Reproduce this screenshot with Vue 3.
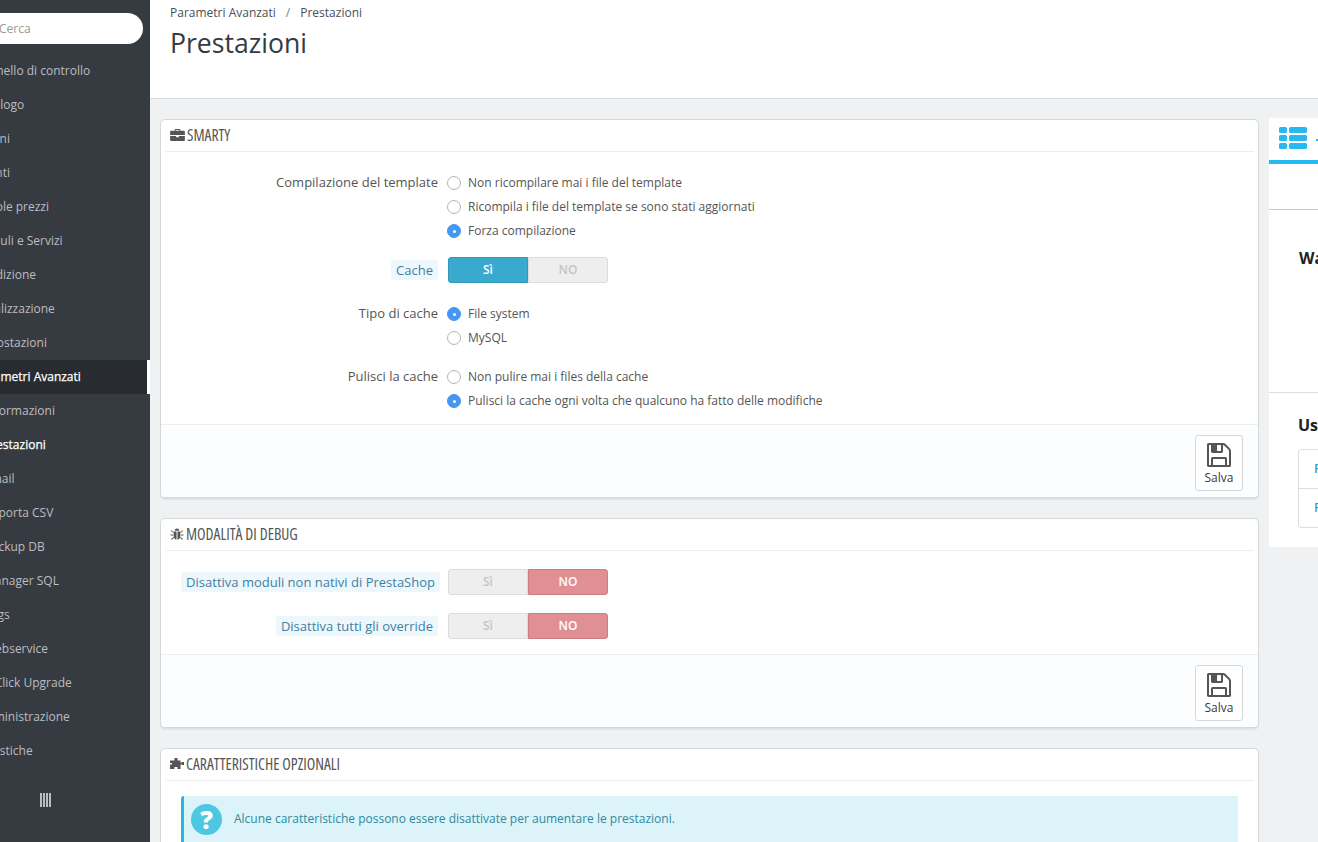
<script setup>
const menu = [
  'Pannello di controllo','Catalogo','Ordini','Clienti','Regole prezzi','Moduli e Servizi','Spedizione',
  'Localizzazione','Impostazioni','Parametri Avanzati','Informazioni','Prestazioni','Email','Importa CSV',
  'Backup DB','Manager SQL','Logs','Webservice','1-Click Upgrade','Amministrazione','Statistiche'
]
const savePath = 'M512 1536h768v-384h-768v384zm896 0h128v-896q0-14-10-38.5t-20-34.5l-281-281q-10-10-34-20t-39-10v416q0 40-28 68t-68 28h-576q-40 0-68-28t-28-68v-416h-128v1280h128v-416q0-40 28-68t68-28h832q40 0 68 28t28 68v416zm-384-928v-320q0-13-9.5-22.5t-22.5-9.5h-192q-13 0-22.5 9.5t-9.5 22.5v320q0 13 9.5 22.5t22.5 9.5h192q13 0 22.5-9.5t9.5-22.5zm640 32v928q0 40-28 68t-68 28h-1344q-40 0-68-28t-28-68v-1344q0-40 28-68t68-28h928q40 0 88 20t76 48l280 280q28 28 48 76t20 88z'
</script>

<template>
  <div class="page">
    <aside class="sidebar">
      <div class="search"><span>Cerca</span></div>
      <ul class="menu">
        <li v-for="(m, i) in menu" :key="m" :class="{ active: i === 9, current: i === 11, sub: i >= 10 && i <= 18 }">
          <span>{{ m }}</span>
        </li>
      </ul>
      <div class="collapse"><i></i><i></i><i></i><i></i></div>
    </aside>

    <main class="main">
      <header class="head">
        <div class="crumbs">Parametri Avanzati<span class="sep">/</span>Prestazioni</div>
        <h1>Prestazioni</h1>
      </header>

      <div class="content">
        <div class="col">
          <section class="panel">
            <h3 class="panel-head">
              <svg class="hicon" viewBox="0 0 16 13" width="15" height="12"><path d="M5 2V1a1 1 0 0 1 1-1h4a1 1 0 0 1 1 1v1h4a1 1 0 0 1 1 1v3.500H0V3a1 1 0 0 1 1-1zM6 1v1h4V1zM0 7.500h6.500V9h3V7.500H16V12a1 1 0 0 1-1 1H1a1 1 0 0 1-1-1z" fill="#555"/></svg>
              <span>SMARTY</span>
            </h3>
            <div class="form smarty">
              <div class="row">
                <label>Compilazione del template</label>
                <div class="radios">
                  <div class="radio"><b></b>Non ricompilare mai i file del template</div>
                  <div class="radio"><b></b>Ricompila i file del template se sono stati aggiornati</div>
                  <div class="radio"><b class="on"></b>Forza compilazione</div>
                </div>
              </div>
              <div class="row cache">
                <label><em>Cache</em></label>
                <div class="switch"><span class="yes-on">Sì</span><span class="off">NO</span></div>
              </div>
              <div class="row">
                <label>Tipo di cache</label>
                <div class="radios">
                  <div class="radio"><b class="on"></b>File system</div>
                  <div class="radio"><b></b>MySQL</div>
                </div>
              </div>
              <div class="row">
                <label>Pulisci la cache</label>
                <div class="radios">
                  <div class="radio"><b></b>Non pulire mai i files della cache</div>
                  <div class="radio"><b class="on"></b>Pulisci la cache ogni volta che qualcuno ha fatto delle modifiche</div>
                </div>
              </div>
            </div>
            <div class="foot">
              <button class="save">
                <svg viewBox="0 0 1792 1792" width="28" height="28"><path :d="savePath" fill="#555"/></svg>
                <span>Salva</span>
              </button>
            </div>
          </section>

          <section class="panel">
            <h3 class="panel-head">
              <svg class="hicon" viewBox="0 0 14 13" width="14" height="12"><path d="M4.500 3a2.500 2.500 0 0 1 5 0zM3.500 3.800h3v8.700C4.700 12.300 3.500 10.800 3.500 9zM7.500 3.800h3V9c0 1.800-1.200 3.300-3 3.500zM.7 2.500l2.800 2v1L.2 3.300zM13.300 2.500l-2.800 2v1l3.300-2.200zM0 7h3v1H0zM11 7h3v1h-3zM3.300 9.800l-2.800 2 .6.800 2.600-1.800zM10.700 9.800l2.800 2-.6.800-2.600-1.800z" fill="#555"/></svg>
              <span>MODALITÀ DI DEBUG</span>
            </h3>
            <div class="form debug">
              <div class="row">
                <label><em class="wide">Disattiva moduli non nativi di PrestaShop</em></label>
                <div class="switch"><span class="off">Sì</span><span class="no-on">NO</span></div>
              </div>
              <div class="row">
                <label><em>Disattiva tutti gli override</em></label>
                <div class="switch"><span class="off">Sì</span><span class="no-on">NO</span></div>
              </div>
            </div>
            <div class="foot">
              <button class="save">
                <svg viewBox="0 0 1792 1792" width="28" height="28"><path :d="savePath" fill="#555"/></svg>
                <span>Salva</span>
              </button>
            </div>
          </section>

          <section class="panel last">
            <h3 class="panel-head">
              <svg class="hicon" viewBox="0 0 14 12" width="14" height="12"><path d="M4.500 0h3v2.500h3v2H12V4h2v3h-2v-.5h-1.500V11h-3V9h-3v2H0V6.500h2V5H0V2.500h4.500z" fill="#555"/></svg>
              <span>CARATTERISTICHE OPZIONALI</span>
            </h3>
            <div class="alert">
              <span class="q">?</span>
              <span>Alcune caratteristiche possono essere disattivate per aumentare le prestazioni.</span>
            </div>
          </section>
        </div>

        <div class="side">
          <div class="tab">
            <div class="tabicon">
              <svg viewBox="0 0 28 22" width="28" height="22">
                <g fill="#25b9f0">
                  <rect x="0" y="0" width="8" height="6" rx="1.500"/><rect x="10" y="0" width="18" height="6" rx="1.500"/>
                  <rect x="0" y="8" width="8" height="6" rx="1.500"/><rect x="10" y="8" width="18" height="6" rx="1.500"/>
                  <rect x="0" y="16" width="8" height="6" rx="1.500"/><rect x="10" y="16" width="18" height="6" rx="1.500"/>
                </g>
              </svg>
              <i class="dash"></i>
            </div>
          </div>
          <div class="side-sec wa"><strong>Watch</strong></div>
          <div class="side-sec us">
            <strong>Use</strong>
            <div class="links">
              <div>Forum PrestaShop</div>
              <div>Forum PrestaShop</div>
            </div>
          </div>
        </div>
      </div>
    </main>
  </div>
</template>

<style>
html, body { margin: 0; padding: 0; overflow: hidden; }
</style>

<style scoped>
.page {
  display: flex;
  width: 1318px;
  height: 842px;
  overflow: hidden;
  font-family: "Open Sans", sans-serif;
  font-size: 12px;
  color: #555;
  background: #eff1f2;
}
.sidebar {
  width: 150px;
  flex: none;
  background: #363a41;
  overflow: hidden;
  display: flex;
  flex-direction: column;
}
.search {
  margin: 13px 7px 0 -41px;
  height: 31px;
  background: #fff;
  border-radius: 16px;
  display: flex;
  align-items: center;
  padding-left: 40px;
  color: #999;
  flex: none;
}
.menu {
  list-style: none;
  margin: 10px 0 0;
  padding: 0;
}
.menu li {
  height: 34px;
  line-height: 34px;
  color: #bcbdc0;
  white-space: nowrap;
  overflow: hidden;
  box-sizing: border-box;
}
.menu li span { margin-left: -25px; display: inline-block; }
.menu li.sub span { margin-left: -16px; }
.menu li.active {
  background: #282b30;
  color: #fff;
  border-right: 3px solid #fff;
  -webkit-text-stroke: .25px #fff;
}
.menu li.current { color: #fff; -webkit-text-stroke: .25px #fff; }
.collapse {
  display: flex;
  gap: 1px;
  margin: 25px 0 0 40px;
}
.collapse i { width: 2px; height: 14px; background: #bcbdc0; }

.main { flex: 1; min-width: 0; display: flex; flex-direction: column; }
.head {
  height: 98px;
  background: #fff;
  border-bottom: 1px solid #d9dbde;
  padding-left: 20px;
  flex: none;
  color: #363a41;
}
.crumbs { padding-top: 5px; line-height: 16px; color: #4a4f56; }
.sep { margin: 0 10px; color: #6c868e; }
h1 {
  margin: 4px 0 0;
  font-size: 26.6px;
  font-weight: 400;
  line-height: 36px;
  color: #363a41;
}
.content {
  display: flex;
  gap: 10px;
  padding: 20px 0 0 10px;
  align-items: flex-start;
}
.col { width: 1099px; flex: none; display: flex; flex-direction: column; gap: 20px; }
.panel {
  background: #fff;
  border: 1px solid #d3d8db;
  border-radius: 5px;
  box-shadow: 0 2px 0 rgba(0,0,0,.06);
  box-sizing: border-box;
  overflow: hidden;
}
.panel.last { height: 200px; flex: none; }
.panel-head {
  margin: 0 4px;
  height: 31px;
  padding: 0 0 1px 5px;
  box-sizing: content-box;
  height: 30px;
  display: flex;
  align-items: center;
  gap: 2px;
  border-bottom: 1px solid #eee;
  font-size: 15.600px;
  font-stretch: 75%;
  font-weight: 400;
  color: #555;
}
.hicon { flex: none; }
.form { display: flex; flex-direction: column; gap: 15px; padding-top: 18px; padding-bottom: 12px; }
.form.debug { padding-top: 18px; padding-bottom: 15px; gap: 18px; }
.row { display: flex; gap: 10px; align-items: flex-start; }
.row.cache { margin-bottom: 3px; }
.row label {
  width: 277px;
  flex: none;
  text-align: right;
  font-size: 13px;
  color: #555;
  line-height: 24px;
}
.row label:has(em) { line-height: 26px; }
.row em {
  font-style: normal;
  background: #eef7fc;
  color: #3f7fa3;
  padding: 1px 5px;
  border-radius: 3px;
}
.row em.wide { margin-right: -2px; }
.radios { display: flex; flex-direction: column; }
.radio {
  height: 24px;
  display: flex;
  align-items: center;
  gap: 7px;
  color: #555;
}
.radio b {
  width: 12px;
  height: 12px;
  border: 1px solid #b4b4b4;
  border-radius: 50%;
  background: #fff;
  margin: 2px 0 0 -1px;
  position: relative;
  flex: none;
}
.radio b.on { background: #4497f2; border-color: #4497f2; }
.radio b.on::after {
  content: "";
  position: absolute;
  left: 4.500px;
  top: 4.500px;
  width: 3px;
  height: 3px;
  border-radius: 50%;
  background: #fff;
}
.switch {
  display: flex;
  width: 160px;
  height: 26px;
  font-weight: 600;
  text-align: center;
  line-height: 23px;
}
.switch span { width: 80px; box-sizing: border-box; }
.switch .off {
  background: #eee;
  color: #c4c4c4;
  border: 1px solid #ddd;
}
.switch .off:first-child { border-radius: 3px 0 0 3px; }
.switch .off:last-child { border-radius: 0 3px 3px 0; }
.switch .yes-on {
  background: #39a9ce;
  color: #fff;
  border: 1px solid #2e98bb;
  border-radius: 3px 0 0 3px;
}
.switch .no-on {
  background: #e08f95;
  color: #fff;
  border: 1px solid #cf7d84;
  border-radius: 0 3px 3px 0;
}
.foot {
  height: 73px;
  box-sizing: border-box;
  background: #fcfdfe;
  border-top: 1px solid #eee;
  padding: 10px 15px 0 0;
  display: flex;
  justify-content: flex-end;
}
.save {
  width: 48px;
  height: 56px;
  padding: 5px 0 0;
  background: #fff;
  border: 1px solid #d3d8db;
  border-radius: 3px;
  display: flex;
  flex-direction: column;
  align-items: center;
  font-family: "Open Sans", sans-serif;
  font-size: 12px;
  color: #363a41;
  line-height: 16px;
}
.save svg { margin-bottom: 1px; }
.alert {
  margin: 15px 20px 0;
  height: 60px;
  background: #dcf4f9;
  border-left: 3px solid #25b9d7;
  border-radius: 3px 0 0 0;
  display: flex;
  align-items: flex-start;
  padding: 8px 0 0 7px;
  gap: 12px;
  color: #2d8aa0;
  line-height: 30px;
  font-size: 12px;
}
.q {
  width: 31px;
  height: 31px;
  border-radius: 50%;
  background: #4dc7e2;
  color: #fff;
  font-weight: 800;
  font-size: 25px;
  line-height: 31px;
  text-align: center;
  flex: none;
}
.side {
  flex: none;
  width: 300px;
  margin-top: -1px;
  background: #fff;
  height: 429px;
  display: flex;
  flex-direction: column;
}
.tab { height: 91px; border-bottom: 1px solid #ccc; flex: none; }
.tabicon {
  border-bottom: 4px solid #25b9f0;
  padding: 9px 0 0 10px;
  box-sizing: border-box;
  height: 46px;
  display: flex;
}
.dash { width: 3px; height: 2px; background: #25b9f0; margin: 12px 0 0 9px; }
.side-sec strong { font-size: 16px; color: #222; font-weight: 700; display: block; }
.wa { height: 183px; padding: 37px 0 0 30px; box-sizing: border-box; border-bottom: 1px solid #ddd; flex: none; }
.us { padding: 21px 0 0 29px; }
.links {
  margin-top: 13px;
  border: 1px solid #ddd;
  border-radius: 3px;
  width: 260px;
}
.links div {
  height: 38px;
  line-height: 38px;
  padding-left: 15px;
  color: #2a9fe0;
  font-weight: 600;
}
.links div + div { border-top: 1px solid #ddd; }
</style>
